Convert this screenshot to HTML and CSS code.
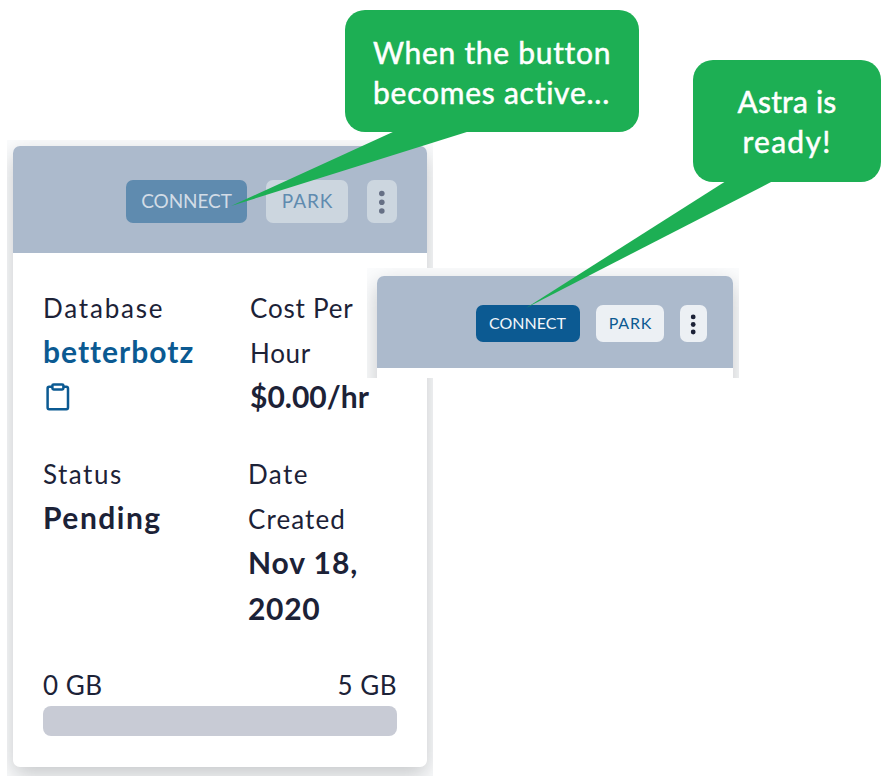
FILE: index.html
```html
<!DOCTYPE html>
<html lang="en">
<head>
<meta charset="utf-8">
<title>Database status</title>
<link rel="stylesheet" href="styles.css">
</head>
<body>
<main class="canvas">
  <section class="frame frame-pending">
    <div class="card">
      <header class="card-header">
        <button class="btn btn-primary connect">CONNECT</button>
        <button class="btn btn-light park">PARK</button>
        <button class="btn btn-light more" aria-label="More"><svg viewBox="0 0 30 43"><circle cx="14.8" cy="13.5" r="2.8"/><circle cx="14.8" cy="22.2" r="2.8"/><circle cx="14.8" cy="31" r="2.8"/></svg></button>
      </header>
      <div class="card-body">
        <div class="facts">
          <div class="fact">
            <p class="label database">Database</p>
            <p class="value name">betterbotz</p>
            <svg class="clipboard" viewBox="0 0 24 28" fill="none" stroke="#0b5a92" stroke-width="2.5" stroke-linejoin="round">
              <path d="M6 3.8H3.2Q1.6 3.8 1.6 5.4V24.6Q1.6 26.2 3.2 26.2H20.4Q22 26.2 22 24.6V5.4Q22 3.8 20.4 3.8H18"/>
              <rect x="6.4" y="1.4" width="11" height="5" rx="1.2"/>
            </svg>
          </div>
          <div class="fact cost">
            <p class="label cost-per">Cost Per</p>
            <p class="label hour">Hour</p>
            <p class="value">$0.00/hr</p>
          </div>
          <div class="fact">
            <p class="label status">Status</p>
            <p class="value pending">Pending</p>
          </div>
          <div class="fact">
            <p class="label date">Date</p>
            <p class="label created">Created</p>
            <p class="value day">Nov 18,</p>
            <p class="value year">2020</p>
          </div>
        </div>
        <div class="scale"><span>0 GB</span><span>5 GB</span></div>
        <div class="bar"></div>
      </div>
    </div>
  </section>

  <section class="frame frame-ready">
    <div class="card">
      <header class="card-header">
        <button class="btn btn-primary connect">CONNECT</button>
        <button class="btn btn-light park">PARK</button>
        <button class="btn btn-light more" aria-label="More"><svg viewBox="0 0 26.5 37"><circle cx="13.2" cy="11.9" r="2.4"/><circle cx="13.2" cy="19.5" r="2.4"/><circle cx="13.2" cy="27" r="2.4"/></svg></button>
      </header>
    </div>
  </section>

  <svg class="tails" viewBox="0 0 890 778" fill="#1daf54">
    <path d="M395 131H470L231 206Z"/>
    <path d="M726 181H773L526 308Z"/>
  </svg>
  <div class="callout callout-active"><span class="line-when">When the button</span><span class="line-becomes">becomes active...</span></div>
  <div class="callout callout-astra"><span class="line-astra">Astra is</span><span class="line-ready">ready!</span></div>
</main>
</body>
</html>
```
FILE: styles.css
```css
* { box-sizing: border-box; }
body { margin: 0; background: #fff; font-family: Lato, "Liberation Sans", sans-serif; color: #1c2237; }
p { margin: 0; }
.canvas { position: relative; width: 890px; height: 778px; overflow: hidden; }

.frame { position: absolute; overflow: hidden; background: #fbfcfd; }
.frame-pending { left: 7px; top: 140px; width: 426px; height: 636px; padding: 6px 6px 9px; }
.frame-ready { left: 367px; top: 268px; width: 372px; height: 110px; padding: 8px 6.5px 0 10px; }
.card { background: #fff; border-radius: 7px; box-shadow: 0 8px 22px rgba(20, 25, 32, .23); }
.frame-pending .card { height: 621px; }
.frame-ready .card { height: 300px; }
.card-header { display: flex; justify-content: flex-end; background: #acbacc; border-radius: 7px 7px 0 0; }
.frame-pending .card-header { height: 107px; padding: 34px 30px 0 0; gap: 19px; }
.frame-ready .card-header { height: 92px; padding: 29px 26px 0 0; gap: 16px; }

.btn { border: 0; padding: 0 0 2px; font-family: inherit; border-radius: 7px; display: flex; align-items: center; justify-content: center; }
.btn-primary { background: #0c5a92; color: #f2f6fa; }
.btn-light { background: #ecf0f4; color: #0c5a92; }
.frame-pending .btn { height: 43px; font-size: 19px; }
.frame-pending .btn-primary { background: #5f8baf; color: #d2dce6; }
.frame-pending .btn-light { background: #ccd6df; color: #5f8baf; }
.frame-pending .connect { width: 121px; letter-spacing: -.1px; }
.frame-pending .park { width: 82px; letter-spacing: .9px; padding-left: 1px; }
.frame-pending .more { width: 30px; }
.frame-ready .btn { height: 37px; font-size: 16px; }
.frame-ready .connect { width: 104px; padding-right: 1px; }
.frame-ready .park { width: 68px; letter-spacing: .8px; padding-left: 1px; }
.frame-ready .more { width: 26.5px; }
.btn.more { padding: 0; }
.more svg { display: block; width: 100%; height: 100%; fill: #1c2237; }
.frame-pending .more svg { fill: #667085; }

.card-body { padding: 32px 30px 0; }
.facts { display: grid; grid-template-columns: 205px 1fr; row-gap: 31px; height: 377px; grid-template-rows: 135px 180px; }
.cost { padding-left: 2px; }
.label { font-size: 26px; line-height: 47px; margin-bottom: -2px; white-space: nowrap; }
.value { font-size: 30px; font-weight: 700; line-height: 42px; padding-bottom: 3px; white-space: nowrap; }
.name { color: #0b5a92; letter-spacing: 1px; }
.database { letter-spacing: 1.8px; }
.cost-per { letter-spacing: .8px; }
.hour { letter-spacing: .7px; }
.status { letter-spacing: 1.5px; }
.date { letter-spacing: 1.4px; }
.created { letter-spacing: 1.1px; }
.pending { letter-spacing: 1.5px; }
.day { letter-spacing: .95px; }
.year { letter-spacing: .7px; padding-top: 1px; }
.clipboard { display: block; width: 24px; height: 28px; margin: 8px 0 0 3px; }
.scale { display: flex; justify-content: space-between; font-size: 26px; line-height: 46px; margin-bottom: -2px; letter-spacing: .5px; }
.bar { height: 30px; border-radius: 8px; background: #c8cbd5; }

.tails { position: absolute; left: 0; top: 0; width: 890px; height: 778px; }
.callout { position: absolute; display: flex; flex-direction: column; height: 122px; border-radius: 20px; background: #1daf54; color: #fff; font-size: 30px; line-height: 40px; white-space: nowrap; -webkit-text-stroke: .5px #fff; }
.callout-active { left: 345px; top: 10px; width: 294px; padding: 22px 0 0 28px; }
.callout-astra { left: 693px; top: 60px; width: 188px; padding: 21px 0 0; align-items: center; }
.line-when { letter-spacing: .7px; }
.line-becomes { letter-spacing: .75px; }
.line-astra { letter-spacing: .2px; }
.line-ready { letter-spacing: 1.3px; }
```
